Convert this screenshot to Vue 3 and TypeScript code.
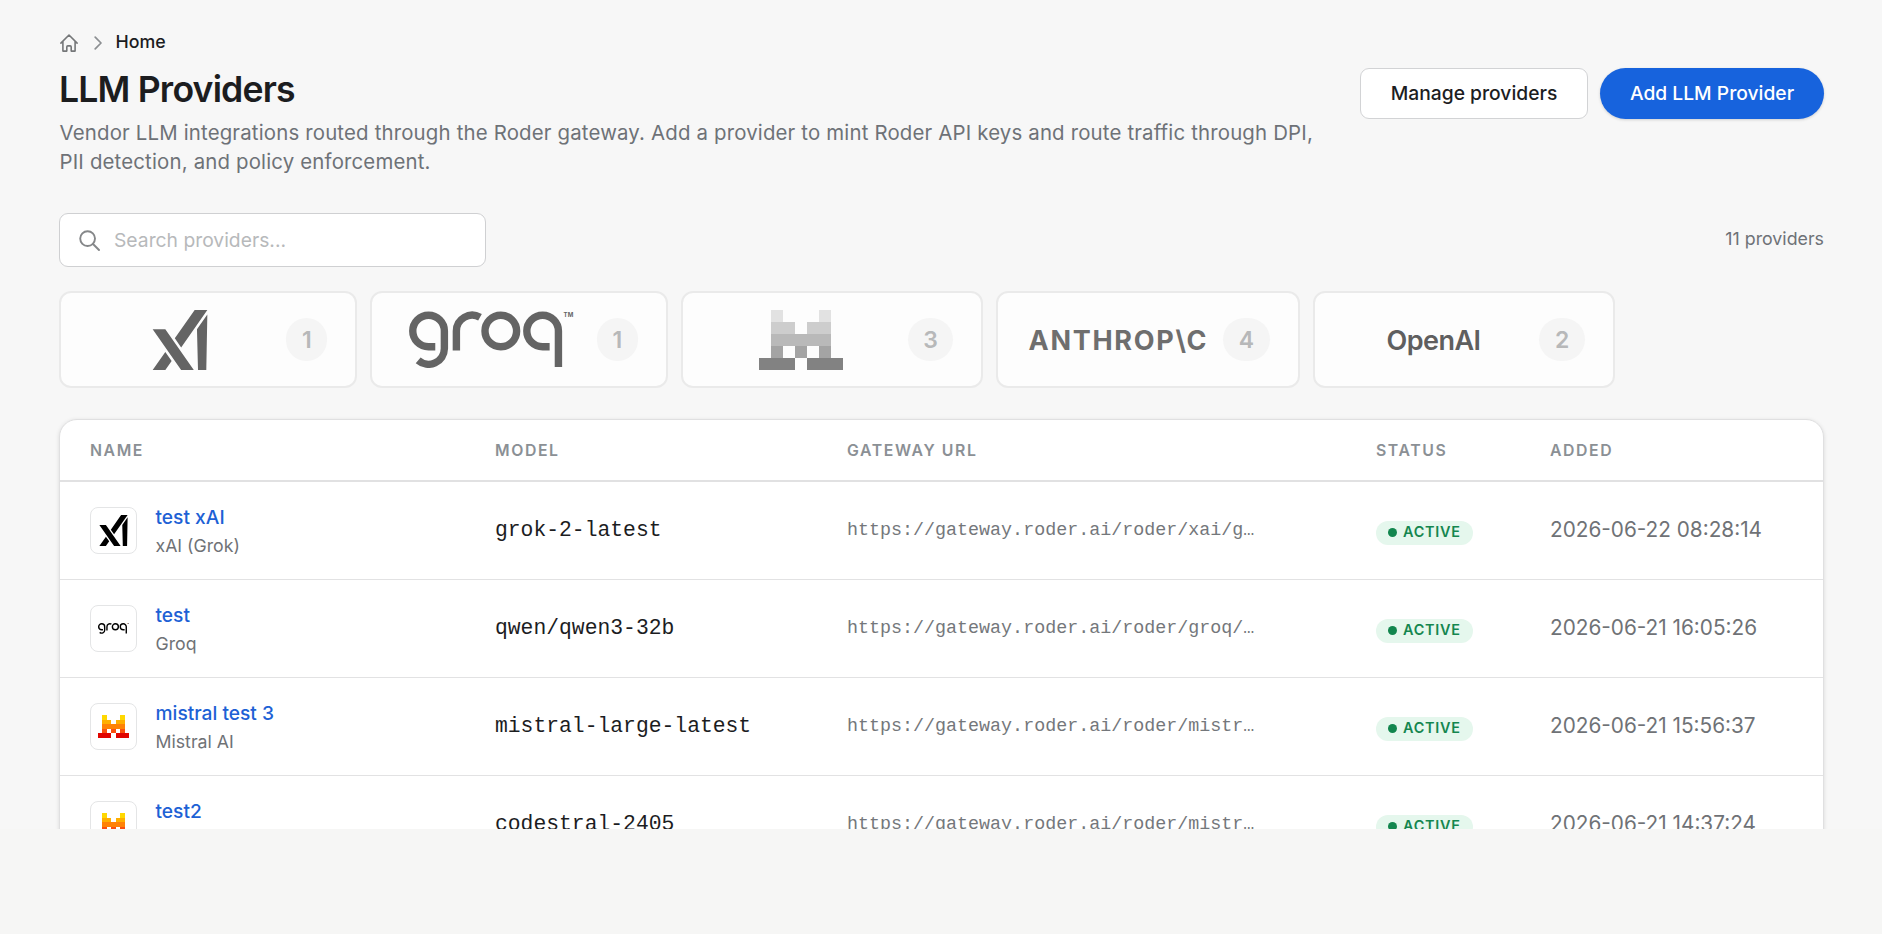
<script setup lang="ts">
import { defineComponent, h } from 'vue'

type Brand = 'xai' | 'groq' | 'mistral' | 'anthropic' | 'openai'

interface BrandCard {
  brand: Brand
  label: string
  count: number
}

interface ProviderRow {
  name: string
  vendor: string
  brand: Brand
  model: string
  url: string
  added: string
}

const cards: BrandCard[] = [
  { brand: 'xai', label: 'xAI', count: 1 },
  { brand: 'groq', label: 'Groq', count: 1 },
  { brand: 'mistral', label: 'Mistral AI', count: 3 },
  { brand: 'anthropic', label: 'Anthropic', count: 4 },
  { brand: 'openai', label: 'OpenAI', count: 2 },
]

const rows: ProviderRow[] = [
  { name: 'test xAI', vendor: 'xAI (Grok)', brand: 'xai', model: 'grok-2-latest', url: 'https://gateway.roder.ai/roder/xai/g…', added: '2026-06-22 08:28:14' },
  { name: 'test', vendor: 'Groq', brand: 'groq', model: 'qwen/qwen3-32b', url: 'https://gateway.roder.ai/roder/groq/…', added: '2026-06-21 16:05:26' },
  { name: 'mistral test 3', vendor: 'Mistral AI', brand: 'mistral', model: 'mistral-large-latest', url: 'https://gateway.roder.ai/roder/mistr…', added: '2026-06-21 15:56:37' },
  { name: 'test2', vendor: 'Mistral AI', brand: 'mistral', model: 'codestral-2405', url: 'https://gateway.roder.ai/roder/mistr…', added: '2026-06-21 14:37:24' },
]

// Pixel grid of the Mistral mark: [x, y, width]; y also picks the colour
const mistralCells: [number, number, number][] = [
  [1, 0, 1], [5, 0, 1],
  [1, 1, 2], [4, 1, 2],
  [1, 2, 5],
  [1, 3, 1], [3, 3, 1], [5, 3, 1],
  [0, 4, 3], [4, 4, 3],
]
const mistralColors = ['#ffd800', '#ffaf00', '#ff8205', '#fa500f', '#e10500']
const mistralGrays = ['#e2e2e2', '#cdcdcd', '#b9b9b9', '#a4a4a4', '#828282']

const BrandLogo = defineComponent({
  props: {
    brand: { type: String, required: true },
    mono: { type: Boolean, default: false },
  },
  setup(props) {
    return () => {
      const ink = props.mono ? '#646464' : '#000'
      if (props.brand === 'xai') {
        return h('svg', { viewBox: '201.61 56.91 438.67 481.45', fill: ink }, [
          h('path', { d: 'M557.09 211.99l8.31 326.37h66.56l8.32-445.18zM640.28 56.91H538.72L379.35 284.53l50.78 72.52zM201.61 538.36h101.56l50.79-72.52-50.79-72.53zM201.61 211.99l228.52 326.37h101.56L303.17 211.99z' }),
        ])
      }
      if (props.brand === 'groq') {
        return h('svg', { viewBox: '7.6 1.7 163.6 56.6', fill: 'none', stroke: ink, 'stroke-width': 7.4 }, [
          h('path', { d: 'M33.7 36.8H27A15.8 15.8 0 1 1 42.8 21V38.6A15.8 15.8 0 0 1 16.6 50.4' }),
          h('path', { d: 'M54.8 40.4V21A15.8 15.8 0 0 1 78.4 7.3' }),
          h('circle', { cx: 99.2, cy: 21, r: 15.8 }),
          h('path', { d: 'M148 36.8h-7A15.8 15.8 0 1 1 156.8 21V57' }),
          h('text', { x: 162, y: 6.9, 'font-family': 'Inter, sans-serif', 'font-size': 6, 'font-weight': 700, fill: ink, stroke: 'none' }, 'TM'),
        ])
      }
      if (props.brand === 'mistral') {
        const palette = props.mono ? mistralGrays : mistralColors
        return h('svg', { viewBox: '0 0 7 5', 'shape-rendering': 'crispEdges' },
          mistralCells.map(([x, y, w]) => h('rect', { x, y, width: w, height: 1, fill: palette[y] })))
      }
      const isOpenAI = props.brand === 'openai'
      return h('svg', { viewBox: '0 0 180 60' }, [
        h('text', {
          x: isOpenAI ? 43.5 : 1.5,
          y: 39.6,
          'font-family': 'Inter, sans-serif',
          'font-size': 27,
          'font-weight': isOpenAI ? 600 : 700,
          textLength: isOpenAI ? 94.5 : 178,
          fill: isOpenAI ? '#5f5f5f' : '#6e6e6e',
        }, isOpenAI ? 'OpenAI' : 'ANTHROP\\C'),
      ])
    }
  },
})
</script>

<template>
  <div class="screen">
    <main class="page">
      <nav class="crumbs">
        <svg class="home" viewBox="0 0 18 18" fill="none" stroke="#757779" stroke-width="1.6" stroke-linejoin="round" stroke-linecap="round">
          <path d="M.9 9.1 9 1l8.1 8.1M2.9 7.6v9.5h3.9v-4.2c0-.6.4-1 1-1h2.4c.6 0 1 .4 1 1v4.2h3.9V7.6" />
        </svg>
        <svg class="chevron" viewBox="0 0 8 14" fill="none" stroke="#8c8f92" stroke-width="1.7" stroke-linecap="round" stroke-linejoin="round">
          <path d="M1.2 1.2 7 7l-5.8 5.8" />
        </svg>
        <span>Home</span>
      </nav>

      <header class="head">
        <div class="intro">
          <h1>LLM Providers</h1>
          <p>Vendor LLM integrations routed through the Roder gateway. Add a provider to mint Roder API keys and route traffic through DPI, PII detection, and policy enforcement.</p>
        </div>
        <div class="actions">
          <button class="btn secondary">Manage providers</button>
          <button class="btn primary">Add LLM Provider</button>
        </div>
      </header>

      <div class="toolbar">
        <label class="search">
          <svg viewBox="0 0 21 21" fill="none" stroke="#858789" stroke-width="1.9" stroke-linecap="round">
            <circle cx="8.6" cy="8.6" r="7.4" />
            <path d="m14 14 6 6" />
          </svg>
          <input type="text" placeholder="Search providers..." />
        </label>
        <span class="total">11 providers</span>
      </div>

      <div class="cards">
        <div v-for="card in cards" :key="card.brand" class="card" :aria-label="card.label">
          <BrandLogo class="brand" :brand="card.brand" mono />
          <span class="count">{{ card.count }}</span>
        </div>
      </div>

      <section class="table">
        <div class="row thead">
          <span>NAME</span><span>MODEL</span><span>GATEWAY URL</span><span>STATUS</span><span>ADDED</span>
        </div>
        <div v-for="row in rows" :key="row.added" class="row">
          <div class="provider">
            <span class="tile"><BrandLogo class="mark" :brand="row.brand" /></span>
            <div class="names">
              <a>{{ row.name }}</a>
              <small>{{ row.vendor }}</small>
            </div>
          </div>
          <span class="model">{{ row.model }}</span>
          <span class="url">{{ row.url }}</span>
          <span class="status"><i></i>ACTIVE</span>
          <span class="date">{{ row.added }}</span>
        </div>
      </section>
    </main>
  </div>
</template>

<style>
html,
body {
  margin: 0;
  background: #f6f6f5;
}
</style>

<style scoped>
.screen {
  height: 934px;
  overflow: hidden;
  font-family: Inter, sans-serif;
  color: #1c1d1f;
}
.screen * {
  box-sizing: border-box;
}
.page {
  height: 829px;
  overflow: hidden;
  padding: 26px 58px 0 59px;
  background: #f7f7f7;
  box-sizing: border-box;
}
.crumbs {
  display: flex;
  align-items: center;
  height: 31px;
  font-size: 17.8px;
  font-weight: 500;
  padding-left: 1px;
}
.home {
  width: 18px;
  height: 18px;
  margin-top: 3px;
}
.chevron {
  width: 8px;
  height: 14px;
  margin: 3px 14px 0 15.5px;
}
.head {
  display: flex;
  justify-content: space-between;
  height: 156px;
}
.intro {
  width: 1275px;
  padding-top: 11px;
}
h1 {
  margin: 0 0 7px;
  font-size: 35.6px;
  line-height: 43px;
  font-weight: 600;
  letter-spacing: -0.82px;
}
.intro p {
  margin: 0 0 0 0.5px;
  font-size: 20.4px;
  line-height: 29px;
  letter-spacing: 0.17px;
  color: #6e7277;
}
.actions {
  display: flex;
  gap: 12px;
  padding-top: 11px;
}
.btn {
  height: 51px;
  border: 0;
  padding: 0 0 2px;
  font: 500 19.25px Inter, sans-serif;
}
.secondary {
  width: 228px;
  border: 1px solid #d2d3d5;
  border-radius: 9px;
  background: #fff;
  color: #1c1d1f;
}
.primary {
  width: 224px;
  border-radius: 26px;
  background: #1763dd;
  color: #fff;
  box-shadow: 0 1px 3px rgba(0, 0, 0, 0.16);
}
.toolbar {
  display: flex;
  justify-content: space-between;
  align-items: center;
  height: 54px;
}
.search {
  display: flex;
  align-items: center;
  width: 427px;
  height: 54px;
  padding-left: 19px;
  border: 1px solid #cfd0d2;
  border-radius: 9px;
  background: #fff;
}
.search svg {
  width: 21px;
  height: 21px;
  margin-right: 14px;
}
.search input {
  flex: 1;
  min-width: 0;
  padding: 0;
  border: 0;
  outline: 0;
  background: none;
  font: 400 19.3px Inter, sans-serif;
}
.search input::placeholder {
  color: #b7b9bb;
  opacity: 1;
}
.total {
  margin-bottom: 3px;
  font-size: 17.8px;
  color: #6e7277;
}
.cards {
  display: flex;
  gap: 13px;
  margin: 24px 0 31px;
}
.card {
  display: flex;
  align-items: center;
  gap: 16.4px;
  height: 97px;
  padding: 0 28px 0 29px;
  border: 2px solid #eaeaea;
  border-radius: 12px;
  background: #fdfdfd;
}
.card:nth-child(n + 2) {
  padding-left: 28.3px;
}
.brand {
  width: 180px;
  height: 60px;
}
.card:nth-child(2) .brand {
  padding: 1.7px 0;
}
.count {
  display: grid;
  place-items: center;
  height: 43px;
  padding: 0 15.6px;
  border-radius: 22px;
  background: #f5f5f5;
  color: #b7b8b9;
  font-size: 23px;
  font-weight: 600;
}
.table {
  height: 520px;
  border: 1px solid #e0e0e1;
  border-radius: 18px;
  background: #fff;
  box-shadow: 0 1px 4px rgba(0, 0, 0, 0.12);
  overflow: hidden;
}
.row {
  display: grid;
  grid-template-columns: 405px 352px 529px 174px 1fr;
  align-items: center;
  height: 98px;
  padding-left: 30px;
  border-bottom: 1px solid #e2e2e3;
}
.thead {
  height: 62px;
  border-bottom: 2px solid #e1e1e2;
  font-size: 15.8px;
  font-weight: 600;
  letter-spacing: 1.6px;
  color: #8b9095;
}
.provider {
  display: flex;
  align-items: center;
}
.tile {
  display: grid;
  place-items: center;
  width: 47px;
  height: 47px;
  margin-right: 18.5px;
  border: 1px solid #e4e5e6;
  border-radius: 8px;
  background: #fff;
}
.mark {
  width: 31px;
  height: 31px;
}
.names {
  display: flex;
  flex-direction: column;
}
.names a {
  font-size: 19.2px;
  line-height: 28px;
  font-weight: 500;
  color: #1d61d5;
}
.names small {
  margin-bottom: -1px;
  padding-top: 1px;
  font-size: 17.7px;
  line-height: 28px;
  color: #6f7276;
}
.model {
  font-family: "Liberation Mono", monospace;
  font-size: 21.35px;
  margin-bottom: 1px;
}
.url {
  font-family: "Liberation Mono", monospace;
  font-size: 18.35px;
  color: #74777b;
}
.status {
  display: flex;
  align-items: center;
  justify-self: start;
  width: 97px;
  height: 24px;
  margin-top: 4px;
  padding: 0 0 2px 12px;
  border-radius: 12px;
  background: #e5f7ed;
  color: #14864f;
  font-size: 14.4px;
  font-weight: 600;
  letter-spacing: 0.76px;
}
.status i {
  width: 9px;
  height: 9px;
  margin: 1px 6px 0 0;
  border-radius: 50%;
  background: #12864e;
}
.date {
  margin-bottom: 2px;
  font-size: 20.75px;
  color: #6f7276;
}
</style>
